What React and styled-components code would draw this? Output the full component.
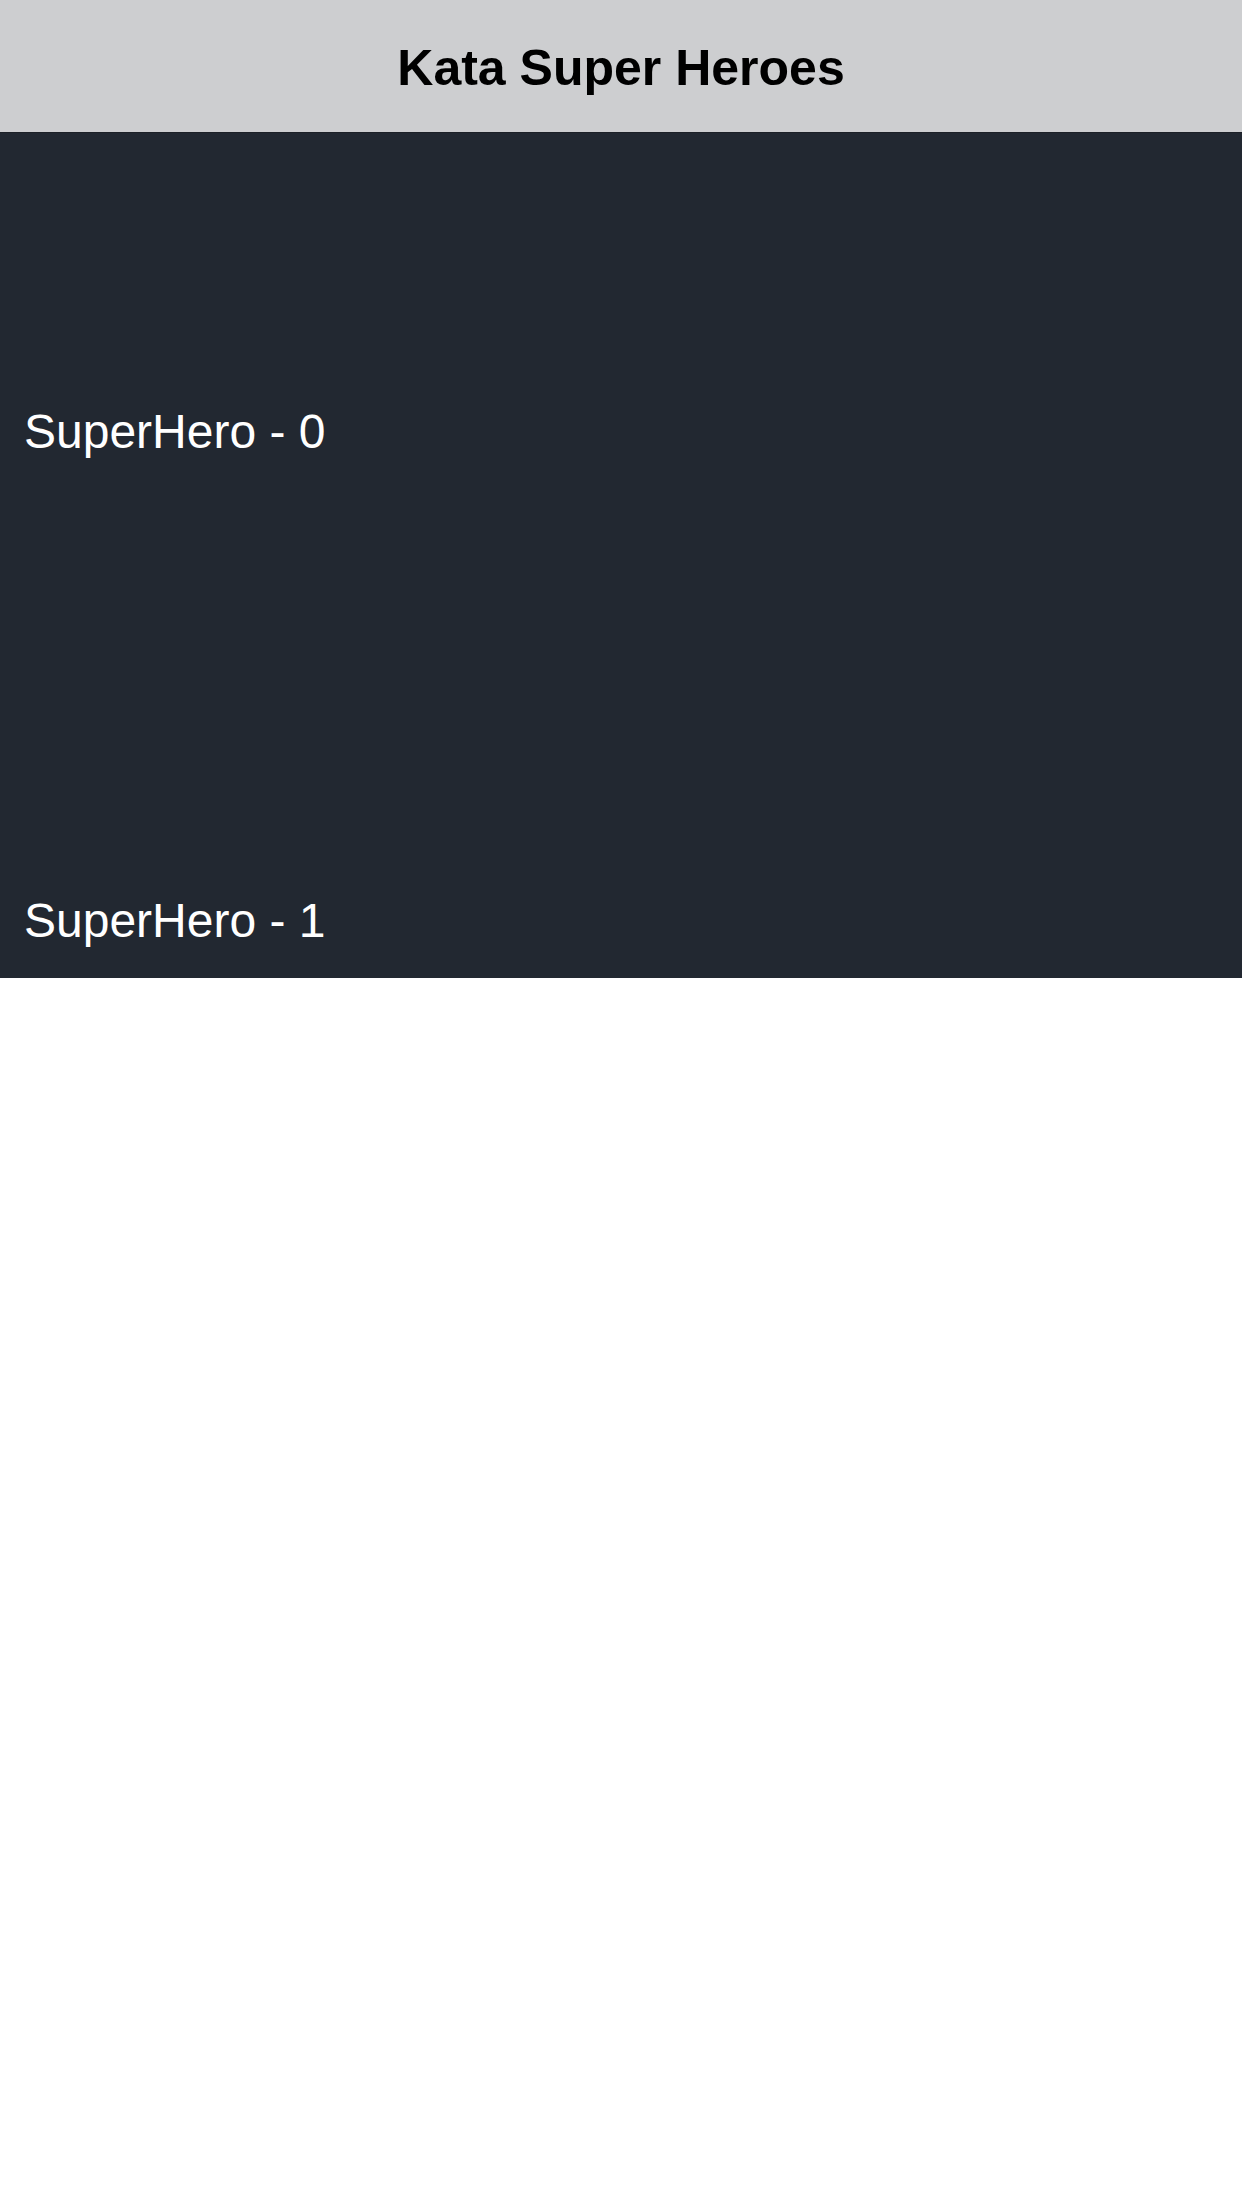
import React from "react"
import styled, { createGlobalStyle } from "styled-components"

const GlobalStyle = createGlobalStyle`
  html, body {
    margin: 0;
    padding: 0;
    background: #ffffff;
    font-family: "Liberation Sans", Arial, sans-serif;
  }
`

const Screen = styled.div`
  position: relative;
  width: 100%;
  min-height: 2208px;
  background: #ffffff;
`

const NavBar = styled.header`
  position: absolute;
  top: 0;
  left: 0;
  right: 0;
  z-index: 2;
  height: 133px;
  box-sizing: border-box;
  padding-top: 39px;
  background: #cdced0;
  border-bottom: 1px solid #1c2027;
  text-align: center;
`

const Title = styled.h1`
  margin: 0;
  font-size: 50px;
  line-height: 58px;
  font-weight: 700;
  color: #000000;
`

const HeroList = styled.ul`
  list-style: none;
  margin: 0;
  padding: 0;
`

const HeroRow = styled.li`
  height: 489px;
  box-sizing: border-box;
  display: flex;
  align-items: flex-end;
  padding: 0 24px 29px;
  background: #222831;
`

const HeroName = styled.span`
  font-size: 48px;
  line-height: 56px;
  color: #ffffff;
`

const heroes = ["SuperHero - 0", "SuperHero - 1"]

const App = () => {
  return (
    <>
      <GlobalStyle />
      <Screen>
        <NavBar>
          <Title>Kata Super Heroes</Title>
        </NavBar>
        <HeroList>
          {heroes.map((name) => (
            <HeroRow key={name}>
              <HeroName>{name}</HeroName>
            </HeroRow>
          ))}
        </HeroList>
      </Screen>
    </>
  )
}

export default App
